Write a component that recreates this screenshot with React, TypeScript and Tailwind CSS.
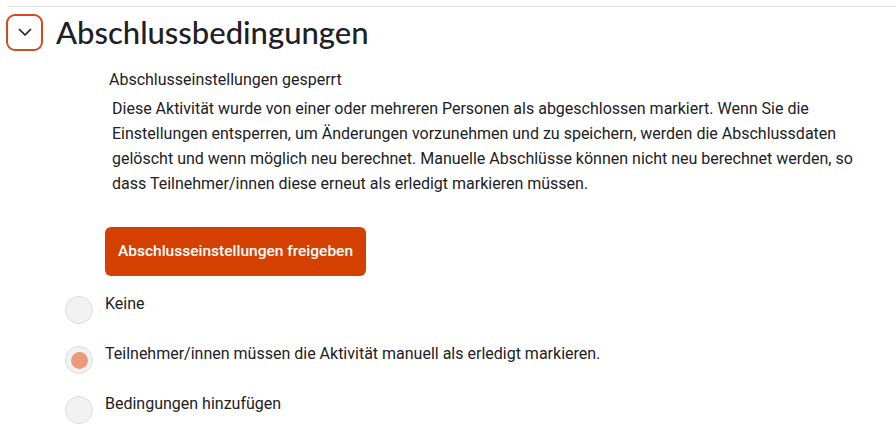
import React from "react";

function Radio({ checked, label }: { checked?: boolean; label: string }) {
  return (
    <div className="flex items-start h-[50px]">
      <div className="w-[28px] h-[28px] ml-[65px] mt-[2px] rounded-full bg-[#f2f2f2] border border-[#dcdcdc] flex items-center justify-center shrink-0">
        {checked && <div className="w-[17px] h-[17px] rounded-full bg-[#ea9a7a]" />}
      </div>
      <div className="ml-[12px] text-[16px] leading-[20px] text-[#1d2125]">{label}</div>
    </div>
  );
}

export default function App() {
  return (
    <div className="w-[896px] h-[446px] bg-white overflow-hidden" style={{ fontFamily: "Roboto, 'Liberation Sans', sans-serif" }}>
      <div className="ml-[8px] mt-[6px] border-t border-[#dee2e6]" />
      <div className="flex items-center mt-[6px] ml-[6px]">
        <div className="w-[37px] h-[37px] rounded-[9px] border-2 border-[#d54a1a] flex items-center justify-center">
          <svg width="16" height="16" viewBox="0 0 16 16" fill="none">
            <path d="M2.5 5.5 L8 11 L13.5 5.5" stroke="#1d2125" strokeWidth="1.7" strokeLinecap="round" strokeLinejoin="round" />
          </svg>
        </div>
        <h2 className="ml-[13px] text-[31px] leading-[38px] font-medium text-[#1d2125]" style={{ fontFamily: "Lato, 'Noto Sans', sans-serif" }}>
          Abschlussbedingungen
        </h2>
      </div>
      <div className="ml-[109px] mt-[19px] text-[16px] leading-[20px] text-[#1d2125]">Abschlusseinstellungen gesperrt</div>
      <p className="ml-[112px] mt-[6px] w-[745px] text-[16px] leading-[25px] text-[#1d2125]">
        Diese Aktivität wurde von einer oder mehreren Personen als abgeschlossen markiert. Wenn Sie die Einstellungen entsperren, um Änderungen vorzunehmen und zu speichern, werden die Abschlussdaten gelöscht und wenn möglich neu berechnet. Manuelle Abschlüsse können nicht neu berechnet werden, so dass Teilnehmer/innen diese erneut als erledigt markieren müssen.
      </p>
      <div className="ml-[105px] mt-[31px]">
        <button className="h-[49px] px-[13px] rounded-[6px] bg-[#d44000] text-white text-[15.5px] font-medium">
          Abschlusseinstellungen freigeben
        </button>
      </div>
      <div className="mt-[18px]">
        <Radio label="Keine" />
        <Radio checked label="Teilnehmer/innen müssen die Aktivität manuell als erledigt markieren." />
        <Radio label="Bedingungen hinzufügen" />
      </div>
    </div>
  );
}
